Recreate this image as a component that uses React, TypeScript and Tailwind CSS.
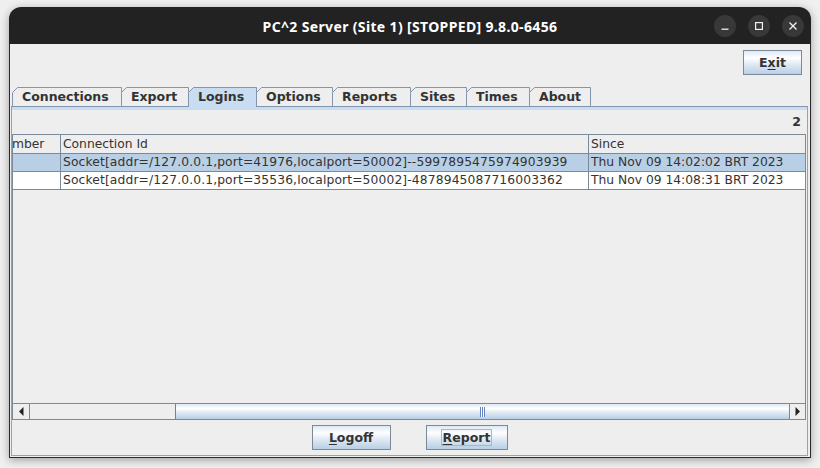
import React from "react";

const GRID = "border-[#7a8a99]";
const BTN_BG =
  "bg-[linear-gradient(to_bottom,#dde8f3_0%,#ffffff_30%,#dde8f3_60%,#b8cfe5_100%)]";

type TabDef = { label: string; w: number; cls: string; selected?: boolean };

const tabs: TabDef[] = [
  { label: "Connections", w: 110, cls: "w-[110px]" },
  { label: "Export", w: 68, cls: "w-[68px]" },
  { label: "Logins", w: 69, cls: "w-[69px]", selected: true },
  { label: "Options", w: 77, cls: "w-[77px]" },
  { label: "Reports", w: 79, cls: "w-[79px]" },
  { label: "Sites", w: 57, cls: "w-[57px]" },
  { label: "Times", w: 64, cls: "w-[64px]" },
  { label: "About", w: 62, cls: "w-[62px]" },
];

function Tab({ t, first }: { t: TabDef; first: boolean }) {
  const h = t.selected ? 20 : 19;
  return (
    <div
      className={`relative shrink-0 ${t.cls} ${first ? "" : "-ml-px"} ${
        t.selected ? "h-[20px] z-20" : "h-[19px] z-10"
      }`}
    >
      <svg
        className="absolute left-0 top-0"
        width={t.w}
        height={h}
        viewBox={`0 0 ${t.w} ${h}`}
      >
        <path
          d={`M0 ${h} V5.5 L5.5 0 H${t.w} V${h} Z`}
          fill={t.selected ? "#c8ddf2" : "#eeeeee"}
        />
        <path
          d={`M0.5 ${h} V5.5 L5.5 0.5 H${t.w - 0.5} V${h}`}
          fill="none"
          stroke="#8495ab"
          strokeWidth={1}
        />
      </svg>
      <div className="relative h-[19px] flex items-center pl-[10px] font-bold text-[12.5px] leading-[15px] text-[#333333] whitespace-nowrap">
        {t.label}
      </div>
    </div>
  );
}

function TitleButton({ children }: { children: React.ReactNode }) {
  return (
    <div className="w-[22px] h-[22px] rounded-full bg-[#383838] flex items-center justify-center">
      {children}
    </div>
  );
}

export default function App() {
  return (
    <div className="w-[820px] h-[468px] bg-[#efefef] pt-[7px] pl-[9px] overflow-hidden [font-family:'DejaVu_Sans',sans-serif] text-[#333333]">
      <div className="w-[802px] h-[451px] flex flex-col rounded-t-[12px] shadow-[0_2px_9px_rgba(0,0,0,0.35)]">
        {/* Title bar */}
        <div className="h-[37px] shrink-0 bg-[#222222] rounded-t-[12px] grid grid-cols-[1fr_auto_1fr] items-center">
          <div />
          <div className="text-white font-bold text-[14px] tracking-[0.35px] pt-[2px] whitespace-nowrap [font-family:'Noto_Sans',sans-serif]">
            PC^2 Server (Site 1) [STOPPED] 9.8.0-6456
          </div>
          <div className="flex justify-end gap-[12px] pr-[7px]">
            <TitleButton>
              <svg width="10" height="10" viewBox="0 0 10 10">
                <path d="M1.5 8.2 H8.5" stroke="#f2f2f2" strokeWidth="1.3" />
              </svg>
            </TitleButton>
            <TitleButton>
              <svg width="10" height="10" viewBox="0 0 10 10">
                <rect x="1.6" y="1.6" width="6.8" height="6.8" fill="none" stroke="#f2f2f2" strokeWidth="1.2" />
              </svg>
            </TitleButton>
            <TitleButton>
              <svg width="10" height="10" viewBox="0 0 10 10">
                <path d="M1.5 1.5 L8.5 8.5 M8.5 1.5 L1.5 8.5" stroke="#f2f2f2" strokeWidth="1.3" />
              </svg>
            </TitleButton>
          </div>
        </div>

        {/* Content */}
        <div className="flex-1 flex flex-col bg-[#eeeeee] border-x border-b border-[#2b2b2b]">
          <div className="flex justify-end pt-[6px] pr-[8px]">
            <div className={`w-[59px] h-[25px] border ${GRID} ${BTN_BG} flex items-center justify-center font-bold text-[12.5px] leading-[15px]`}>
              <span>
                E<u className="underline-offset-[2px]">x</u>it
              </span>
            </div>
          </div>

          {/* Tabs */}
          <div className="mt-[12px] h-[19px] flex items-start pl-[2px] relative z-10">
            {tabs.map((t, i) => (
              <Tab key={t.label} t={t} first={i === 0} />
            ))}
          </div>

          {/* Tab panel */}
          <div className="ml-[1px] mr-[2px] mb-[1px] flex-1 flex flex-col border-x border-b border-[#86a3d4] border-t border-t-[#8495ab]">
            <div className="h-[3px] bg-[#c8ddf2]" />
            <div className="pt-[4px] pr-[6px] h-[19px] text-right font-bold text-[12.5px] leading-[15px]">
              2
            </div>

            {/* Scroll pane */}
            <div className={`mt-[5px] mr-[1px] h-[286px] border ${GRID} flex flex-col text-[12.3px]`}>
              <div className="flex-1 bg-[#eeeeee] overflow-hidden">
                {/* header */}
                <div className={`flex h-[19px] border-b ${GRID} bg-[#eeeeee]`}>
                  <div className={`w-[48px] border-r ${GRID} overflow-hidden flex items-center pt-px`}>
                    <span className="ml-[-18px] whitespace-nowrap">Number</span>
                  </div>
                  <div className={`w-[528px] border-r ${GRID} pl-[2px] pt-px flex items-center whitespace-nowrap`}>
                    Connection Id
                  </div>
                  <div className="flex-1 pl-[2px] pt-px flex items-center whitespace-nowrap">Since</div>
                </div>
                {/* row 1 (selected) */}
                <div className={`flex h-[18px] border-b ${GRID} bg-[#b8cfe5]`}>
                  <div className={`w-[48px] border-r ${GRID}`} />
                  <div className={`w-[528px] border-r ${GRID} pl-[2px] flex items-center whitespace-nowrap overflow-hidden tracking-[0.13px]`}>
                    Socket[addr=/127.0.0.1,port=41976,localport=50002]--5997895475974903939
                  </div>
                  <div className="flex-1 pl-[2px] flex items-center whitespace-nowrap overflow-hidden">
                    Thu Nov 09 14:02:02 BRT 2023
                  </div>
                </div>
                {/* row 2 */}
                <div className={`flex h-[18px] border-b ${GRID} bg-white`}>
                  <div className={`w-[48px] border-r ${GRID}`} />
                  <div className={`w-[528px] border-r ${GRID} pl-[2px] flex items-center whitespace-nowrap overflow-hidden tracking-[0.13px]`}>
                    Socket[addr=/127.0.0.1,port=35536,localport=50002]-4878945087716003362
                  </div>
                  <div className="flex-1 pl-[2px] flex items-center whitespace-nowrap overflow-hidden">
                    Thu Nov 09 14:08:31 BRT 2023
                  </div>
                </div>
              </div>

              {/* horizontal scrollbar */}
              <div className={`h-[16px] shrink-0 border-t ${GRID} flex`}>
                <div className={`w-[17px] border-r ${GRID} bg-[#eeeeee] flex items-center justify-center`}>
                  <svg width="5" height="9" viewBox="0 0 5 9">
                    <path d="M4.5 0 V9 L0 4.5 Z" fill="#222222" />
                  </svg>
                </div>
                <div className="w-[145px] bg-[#eeeeee]" />
                <div className={`flex-1 border-l border-[#6382bf] ${BTN_BG} flex items-center justify-center`}>
                  <svg width="6" height="10" viewBox="0 0 6 10">
                    <rect x="0" y="0" width="1" height="10" fill="#6382bf" />
                    <rect x="1" y="0" width="1" height="10" fill="#ffffff" />
                    <rect x="2" y="0" width="1" height="10" fill="#6382bf" />
                    <rect x="3" y="0" width="1" height="10" fill="#ffffff" />
                    <rect x="4" y="0" width="1" height="10" fill="#6382bf" />
                  </svg>
                </div>
                <div className={`w-[16px] border-l ${GRID} bg-[#eeeeee] flex items-center justify-center`}>
                  <svg width="5" height="9" viewBox="0 0 5 9">
                    <path d="M0.5 0 V9 L5 4.5 Z" fill="#222222" />
                  </svg>
                </div>
              </div>
            </div>

            {/* Buttons */}
            <div className="mt-[5px] flex justify-center gap-[35px]">
              <div className={`w-[79px] h-[25px] border ${GRID} ${BTN_BG} flex items-center justify-center font-bold text-[12.5px] leading-[15px]`}>
                <span>
                  <u className="underline-offset-[2px]">L</u>ogoff
                </span>
              </div>
              <div className={`w-[82px] h-[25px] border ${GRID} ${BTN_BG} flex items-center justify-center font-bold text-[12.5px] leading-[15px]`}>
                <span className="border border-[#a3b8cc] px-px">
                  <u className="underline-offset-[2px]">R</u>eport
                </span>
              </div>
            </div>
          </div>
        </div>
      </div>
    </div>
  );
}
